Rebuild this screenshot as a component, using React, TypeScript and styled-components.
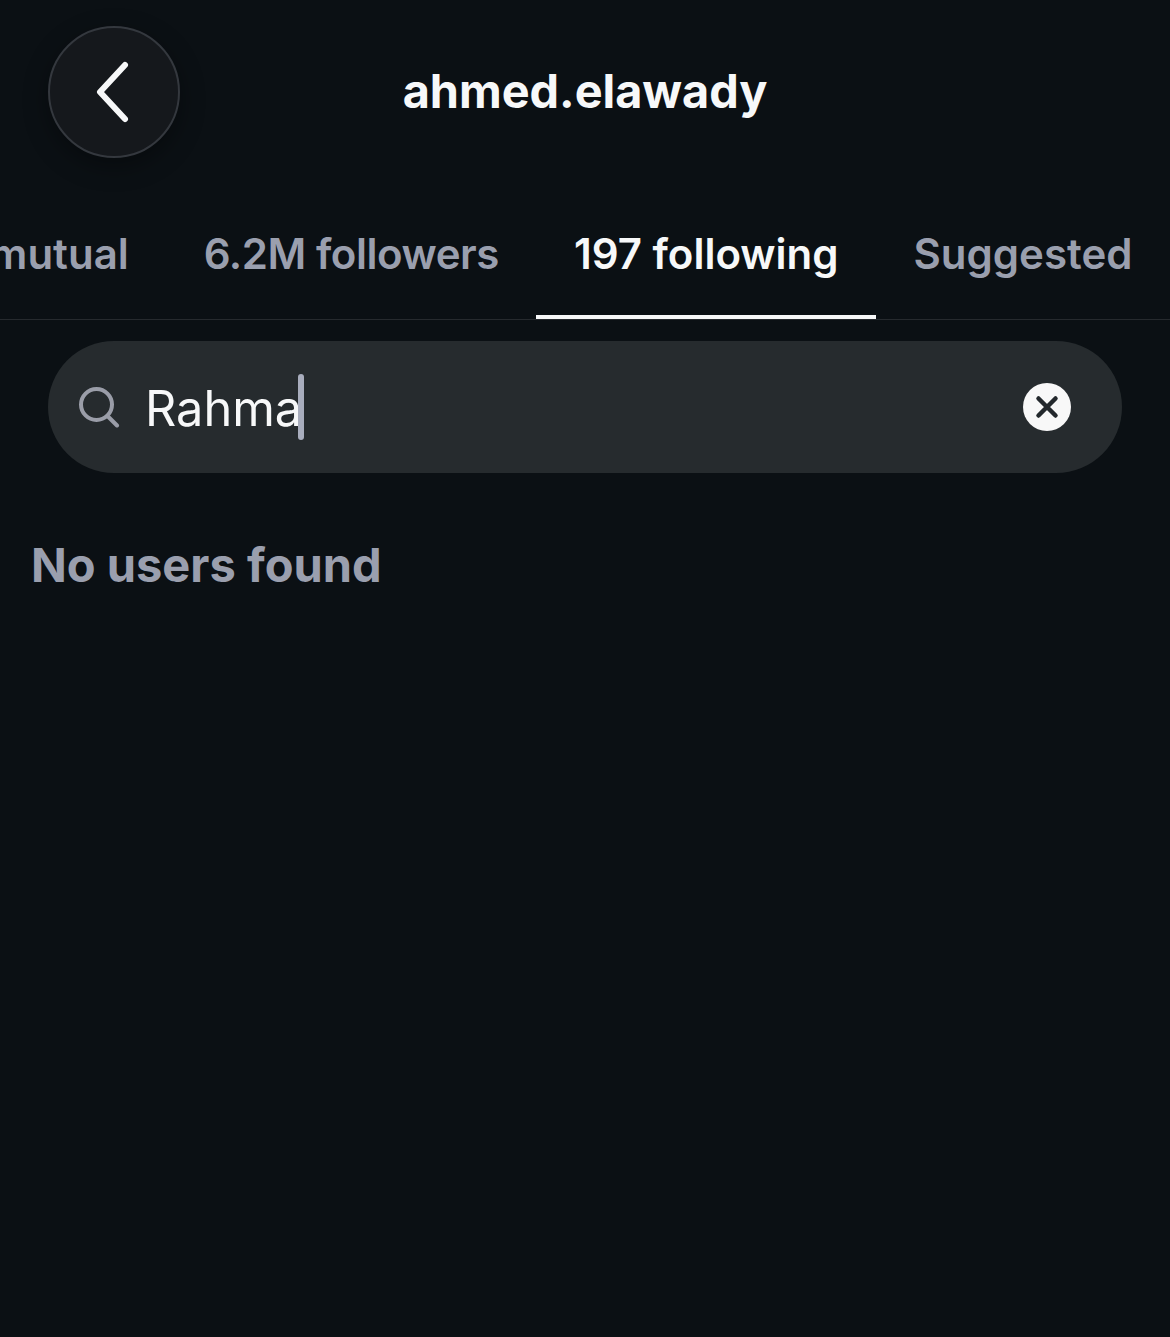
import styled, { createGlobalStyle } from "styled-components";

const tabs = [
  { label: "mutual", active: false, tracking: 0 },
  { label: "6.2M followers", active: false, tracking: -0.45 },
  { label: "197 following", active: true, tracking: 0 },
  { label: "Suggested", active: false, tracking: 0 },
];

export default function App(): JSX.Element {
  return <Page>
    <GlobalStyle />
    <Header>
      <BackButton aria-label="Back">
        <svg width="132" height="132" viewBox="0 0 132 132" fill="none">
          <path d="M77 39L52 66L77 93" stroke="#f7f8f9" strokeWidth="6" strokeLinecap="round" strokeLinejoin="round" />
        </svg>
      </BackButton>
      <Title>ahmed.elawady</Title>
    </Header>
    <TabBar>
      {tabs.map(tab => <Tab $active={tab.active} $tracking={tab.tracking} key={tab.label}>{tab.label}</Tab>)}
    </TabBar>
    <SearchBar>
      <svg width="42" height="42" viewBox="0 0 42 42" fill="none">
        <circle cx="18.5" cy="18.5" r="15.5" stroke="#9a9da8" strokeWidth="4" />
        <path d="M29.5 30L39 39.5" stroke="#9a9da8" strokeWidth="4" strokeLinecap="round" />
      </svg>
      <SearchField>
        <Query>Rahma</Query>
        <Caret />
      </SearchField>
      <ClearButton aria-label="Clear">
        <svg width="48" height="48" viewBox="0 0 48 48" fill="none">
          <path d="M15.5 15.5L32.5 32.5M32.5 15.5L15.5 32.5" stroke="#23282c" strokeWidth="4.5" strokeLinecap="round" />
        </svg>
      </ClearButton>
    </SearchBar>
    <EmptyMessage>No users found</EmptyMessage>
  </Page>;
}

const GlobalStyle = createGlobalStyle`
  html, body {
    margin: 0;
    padding: 0;
    background: #0b1014;
  }
`;

const Page = styled.main`
  display: flex;
  flex-direction: column;
  width: 1170px;
  height: 1337px;
  overflow: hidden;
  background: #0b1014;
  color: #f7f8f9;
  font-family: Inter, "Liberation Sans", sans-serif;
`;

const Header = styled.header`
  position: relative;
  display: flex;
  align-items: center;
  justify-content: center;
  height: 132px;
  margin-top: 26px;
`;

const BackButton = styled.button`
  position: absolute;
  left: 48px;
  top: 0;
  display: flex;
  align-items: center;
  justify-content: center;
  box-sizing: border-box;
  width: 132px;
  height: 132px;
  padding: 0;
  border: 2px solid #34383e;
  border-radius: 50%;
  background: #15181c;
  box-shadow: 0 8px 24px rgba(0, 0, 0, 0.35);

  svg {
    flex: none;
  }
`;

const Title = styled.h1`
  margin: 0 0 2px;
  font-size: 46.8px;
  font-weight: 700;
  line-height: 54px;
`;

const TabBar = styled.nav`
  display: flex;
  align-items: flex-end;
  justify-content: flex-end;
  box-sizing: border-box;
  height: 162px;
  overflow: hidden;
  border-bottom: 1px solid #262a2e;
`;

const Tab = styled.div<{ $active: boolean; $tracking: number }>`
  flex: none;
  box-sizing: border-box;
  height: 86px;
  padding: 0 37.5px;
  font-size: 42px;
  font-weight: 600;
  line-height: 42px;
  letter-spacing: ${({ $tracking }) => $tracking}px;
  white-space: nowrap;
  color: ${({ $active }) => ($active ? "#f7f8f9" : "#9a9fae")};
  border-bottom: 4px solid ${({ $active }) => ($active ? "#f7f8f9" : "transparent")};
`;

const SearchBar = styled.div`
  display: flex;
  align-items: center;
  box-sizing: border-box;
  width: 1074px;
  height: 132px;
  margin: 21px 0 0 48px;
  padding: 0 51px 0 30px;
  border-radius: 66px;
  background: #262b2e;
`;

const SearchField = styled.div`
  display: flex;
  align-items: center;
  flex: 1;
  margin-left: 25px;
`;

const Query = styled.span`
  padding-top: 4px;
  font-size: 48.7px;
  font-weight: 400;
  line-height: 62px;
`;

const Caret = styled.span`
  width: 6px;
  height: 66px;
  margin-left: -4px;
  border-radius: 3px;
  background: #a8adbd;
`;

const ClearButton = styled.button`
  display: flex;
  align-items: center;
  justify-content: center;
  width: 48px;
  height: 48px;
  padding: 0;
  border: none;
  border-radius: 50%;
  background: #f8f8f8;
`;

const EmptyMessage = styled.p`
  margin: 64px 0 0 31px;
  font-size: 47px;
  font-weight: 700;
  line-height: 56px;
  color: #9a9fae;
`;
